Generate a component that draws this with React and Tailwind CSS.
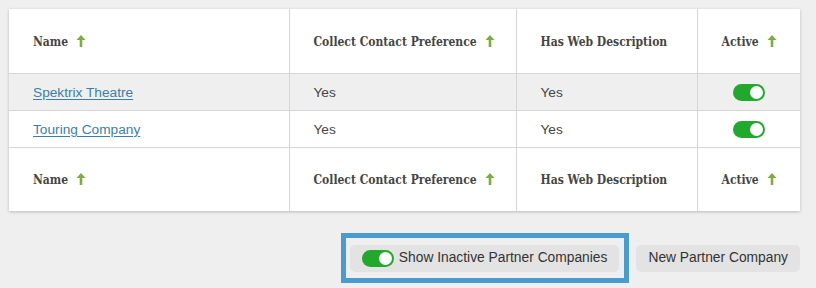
import React, { useState } from 'react';

const rows = [
  { name: 'Spektrix Theatre', contact: 'Yes', web: 'Yes', active: true },
  { name: 'Touring Company', contact: 'Yes', web: 'Yes', active: true },
];

function SortArrow() {
  return (
    <svg viewBox="0 0 10 12" className="ml-2 inline-block h-[12px] w-[10px] align-[-1px] text-[#7cad3f]" fill="currentColor">
      <path d="M5 0 L9.5 5 L6.3 5 L6.3 12 L3.7 12 L3.7 5 L0.5 5 Z" />
    </svg>
  );
}

function Toggle({ on }) {
  return (
    <span className={`inline-flex h-[17px] w-[32px] items-center rounded-full p-[2px] ${on ? 'justify-end bg-[#23a82e]' : 'justify-start bg-[#bbbbbb]'}`}>
      <span className="h-[13px] w-[13px] rounded-full bg-white" />
    </span>
  );
}

function HeaderRow({ bottom }) {
  const th = 'h-[64px] whitespace-nowrap px-6 pt-[2px] text-left align-middle text-[12px] font-bold text-[#454545]';
  return (
    <tr className={bottom ? '' : 'border-b border-[#d6d6d6]'}>
      <th className={th}>
        Name
        <SortArrow />
      </th>
      <th className={`${th} border-l border-[#d6d6d6]`}>
        Collect Contact Preference
        <SortArrow />
      </th>
      <th className={`${th} border-l border-[#d6d6d6]`}>Has Web Description</th>
      <th className={`${th} border-l border-[#d6d6d6] text-center`}>
        Active
        <SortArrow />
      </th>
    </tr>
  );
}

export default function App() {
  const [showInactive, setShowInactive] = useState(true);
  const td = 'h-[37px] px-6 pt-[3px] align-middle text-[13.7px] text-[#444]';

  return (
    <div className="min-h-[288px] w-[816px] bg-[#efefef] pt-[9px] pl-[9px]" style={{ fontFamily: '"Liberation Sans", Arial, sans-serif' }}>
      <div className="w-[791px] bg-white shadow-[0_1px_3px_rgba(0,0,0,0.22)]">
        <table className="w-full table-fixed border-collapse" style={{ fontFamily: '"DejaVu Serif Condensed", "DejaVu Serif", serif' }}>
          <colgroup>
            <col className="w-[280px]" />
            <col className="w-[227px]" />
            <col className="w-[181px]" />
            <col className="w-[103px]" />
          </colgroup>
          <thead>
            <HeaderRow />
          </thead>
          <tbody style={{ fontFamily: '"Liberation Sans", Arial, sans-serif' }}>
            {rows.map((r, i) => (
              <tr key={r.name} className={`border-b border-[#d6d6d6] ${i === 0 ? 'bg-[#efefef]' : 'bg-white'}`}>
                <td className={td}>
                  <a href="#" className="text-[#3b7fa8] underline underline-offset-2">{r.name}</a>
                </td>
                <td className={`${td} border-l border-[#d6d6d6]`}>{r.contact}</td>
                <td className={`${td} border-l border-[#d6d6d6]`}>{r.web}</td>
                <td className={`${td} border-l border-[#d6d6d6] text-center`}>
                  <span className="inline-flex translate-y-[2px]">
                    <Toggle on={r.active} />
                  </span>
                </td>
              </tr>
            ))}
          </tbody>
          <tfoot>
            <HeaderRow bottom />
          </tfoot>
        </table>
      </div>

      <div className="mt-[22px] flex w-[791px] items-center justify-end gap-[7px]">
        <div className="border-[5px] border-[#4a9bd0] pt-[7px] pr-[5px] pb-[6px] pl-[4px]">
          <button
            type="button"
            onClick={() => setShowInactive(!showInactive)}
            className="flex h-[27px] items-center gap-[5px] rounded-[5px] bg-[#e3e3e3] pl-3 pr-[12px] text-[13.8px] text-[#333]"
          >
            <Toggle on={showInactive} />
            Show Inactive Partner Companies
          </button>
        </div>
        <button type="button" className="h-[27px] rounded-[5px] bg-[#e3e3e3] px-3 text-[13.8px] text-[#333]">
          New Partner Company
        </button>
      </div>
    </div>
  );
}
